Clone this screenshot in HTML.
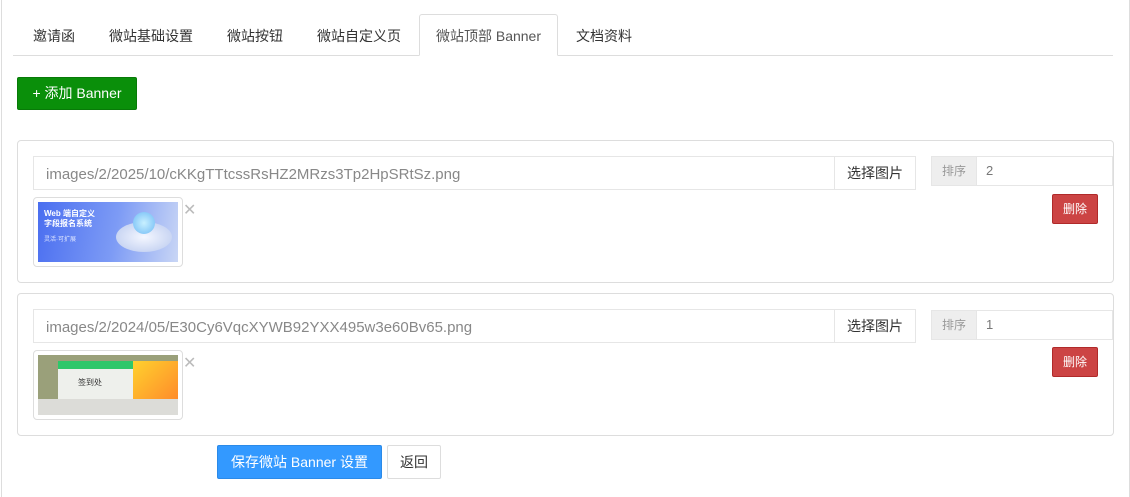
<!DOCTYPE html>
<html><head><meta charset="utf-8"><style>
*{box-sizing:border-box;margin:0;padding:0}
body{width:1130px;height:497px;background:#fff;font-family:"Liberation Sans","Noto Sans CJK SC",sans-serif;font-size:14px;color:#333;position:relative;overflow:hidden}
.abs{position:absolute}
.vl{position:absolute;top:0;bottom:0;width:1px;background:#ddd}
.tabline{left:13px;top:55px;width:1100px;height:1px;background:#ddd}
.tab{top:15px;height:42px;line-height:42px;font-size:14px;color:#333}
.active{top:14px;left:419px;width:139px;border:1px solid #ddd;border-bottom:1px solid #fff;border-radius:3px 3px 0 0;background:#fff;text-align:center;color:#555}
.btn-add{left:17px;top:77px;width:120px;height:33px;background:#0a8f0a;border:1px solid #087a08;border-radius:2px;color:#fff;line-height:31px;text-align:center}
.panel{left:17px;width:1097px;height:143px;border:1px solid #ddd;border-radius:4px}
.inp{left:33px;width:802px;height:34px;border:1px solid #e6e6e6;color:#888;font-size:15px;line-height:32px;padding-left:12px;padding-top:2px}
.sel{left:834px;width:82px;height:34px;border:1px solid #e6e6e6;line-height:32px;text-align:center;color:#333}
.sortl{left:931px;width:46px;height:30px;background:#eee;border:1px solid #e6e6e6;color:#999;font-size:12px;line-height:28px;text-align:center}
.sortv{left:976px;width:137px;height:30px;border:1px solid #e6e6e6;border-left:0;color:#777;font-size:13px;line-height:28px;padding-left:10px}
.del{left:1052px;width:46px;height:30px;background:#cc4444;border:1px solid #b02a2a;border-radius:2px;color:#fff;font-size:12px;line-height:28px;text-align:center}
.thumb{left:33px;width:150px;height:70px;border:1px solid #ddd;border-radius:4px;background:#fff}
.thumb .img{position:absolute;left:4px;top:4px;width:140px;height:60px;overflow:hidden}
.x{color:#bbb;font-size:16px}
</style></head><body>
<div class="vl" style="left:1px"></div>
<div class="vl" style="left:1129px"></div>
<div class="abs tabline"></div>
<div class="abs tab" style="left:33px">邀请函</div>
<div class="abs tab" style="left:109px">微站基础设置</div>
<div class="abs tab" style="left:227px">微站按钮</div>
<div class="abs tab" style="left:317px">微站自定义页</div>
<div class="abs tab active">微站顶部 Banner</div>
<div class="abs tab" style="left:576px">文档资料</div>
<div class="abs btn-add">+ 添加 Banner</div>

<div class="abs panel" style="top:140px"></div>
<div class="abs inp" style="top:156px">images/2/2025/10/cKKgTTtcssRsHZ2MRzs3Tp2HpSRtSz.png</div>
<div class="abs sel" style="top:156px">选择图片</div>
<div class="abs sortl" style="top:156px">排序</div>
<div class="abs sortv" style="top:156px">2</div>
<div class="abs del" style="top:194px">删除</div>
<div class="abs thumb" style="top:197px"><div class="img" style="background:linear-gradient(100deg,#4a6ef0 0%,#7d9bf5 55%,#c9d6f5 100%)">
<div style="position:absolute;left:6px;top:7px;color:#fff;font-size:8px;font-weight:bold;line-height:10px">Web 端自定义<br>字段报名系统</div>
<div style="position:absolute;left:6px;top:32px;color:#dfe6ff;font-size:6px">灵活·可扩展</div>
<div style="position:absolute;left:78px;top:20px;width:56px;height:30px;border-radius:50%;background:radial-gradient(#f4f7ff,#b8c8ee)"></div>
<div style="position:absolute;left:95px;top:10px;width:22px;height:22px;border-radius:50%;background:radial-gradient(#c8f0ff,#6fbaf5)"></div>
</div></div>
<div class="abs x" style="left:183px;top:200px">✕</div>

<div class="abs panel" style="top:293px"></div>
<div class="abs inp" style="top:309px">images/2/2024/05/E30Cy6VqcXYWB92YXX495w3e60Bv65.png</div>
<div class="abs sel" style="top:309px">选择图片</div>
<div class="abs sortl" style="top:310px">排序</div>
<div class="abs sortv" style="top:310px">1</div>
<div class="abs del" style="top:347px">删除</div>
<div class="abs thumb" style="top:350px"><div class="img" style="background:#9aa07a">
<div style="position:absolute;left:20px;top:6px;width:120px;height:40px;background:#eef0ec"></div>
<div style="position:absolute;left:20px;top:6px;width:120px;height:8px;background:#2ec76a"></div>
<div style="position:absolute;left:95px;top:6px;width:45px;height:40px;background:linear-gradient(135deg,#ffd12e,#ff8a2a)"></div>
<div style="position:absolute;left:40px;top:22px;font-size:8px;color:#333">签到处</div>
<div style="position:absolute;left:0;top:44px;width:140px;height:16px;background:#dcdcd8"></div>
</div></div>
<div class="abs x" style="left:183px;top:353px">✕</div>

<div class="abs" style="left:217px;top:445px;width:165px;height:34px;background:#3399ff;border:1px solid #2b8ae8;border-radius:2px;color:#fff;line-height:32px;text-align:center">保存微站 Banner 设置</div>
<div class="abs" style="left:387px;top:445px;width:54px;height:34px;border:1px solid #ddd;border-radius:2px;line-height:32px;text-align:center;color:#333">返回</div>
</body></html>
